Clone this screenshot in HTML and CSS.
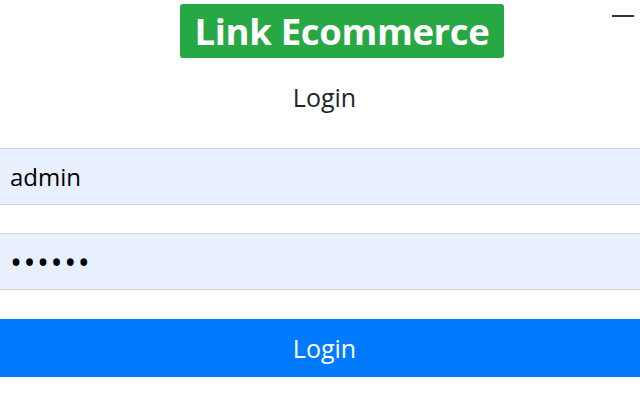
FILE: index.html
```html
<!DOCTYPE html>
<html>
<head>
<meta charset="utf-8">
<link rel="stylesheet" href="styles.css">
</head>
<body>
<div class="page">
  <header class="header">
    <h1 class="brand">Link Ecommerce</h1>
    <span class="minimize" aria-label="minimize"></span>
  </header>
  <div class="title">Login</div>
  <form class="form">
    <input class="field" type="text" value="admin">
    <input class="field field-pass" type="password" value="123456">
    <button class="btn" type="button">Login</button>
  </form>
</div>
</body>
</html>
```
FILE: styles.css
```css
html, body {
  margin: 0;
  padding: 0;
  background: #fff;
}
body {
  font-family: "Open Sans", "Noto Sans", sans-serif;
  color: #212529;
}
.page {
  display: flex;
  flex-direction: column;
}
.header {
  position: relative;
  display: flex;
  justify-content: center;
  padding-top: 4px;
  padding-left: 44px;
}
.brand {
  margin: 0;
  background: #28a745;
  color: #fff;
  font-size: 36.5px;
  font-weight: 700;
  line-height: 54px;
  height: 54px;
  padding: 0 15px;
  border-radius: 3px;
  letter-spacing: -0.35px;
}
.minimize {
  position: absolute;
  right: 6px;
  top: 15px;
  width: 22px;
  height: 2px;
  background: #333;
}
.title {
  text-align: center;
  font-size: 25px;
  line-height: 32px;
  margin-top: 23px;
  padding-left: 9px;
}
.form {
  display: flex;
  flex-direction: column;
  gap: 28px;
  margin-top: 35px;
}
.field {
  box-sizing: border-box;
  width: 100%;
  height: 57px;
  margin: 0;
  border: 1px solid #ced4da;
  border-left: none;
  border-right: none;
  background: #e8f0fe;
  font-family: "Open Sans", "Noto Sans", sans-serif;
  font-size: 24px;
  color: #000;
  padding: 0 10px;
  outline: none;
}
.field-pass {
  font-size: 32px;
  letter-spacing: 1.5px;
}
.btn {
  height: 58px;
  margin: 1px 0 0;
  border: none;
  background: #007bff;
  color: #fff;
  font-family: "Open Sans", "Noto Sans", sans-serif;
  font-size: 25px;
  padding: 0 0 0 9px;
}
```
